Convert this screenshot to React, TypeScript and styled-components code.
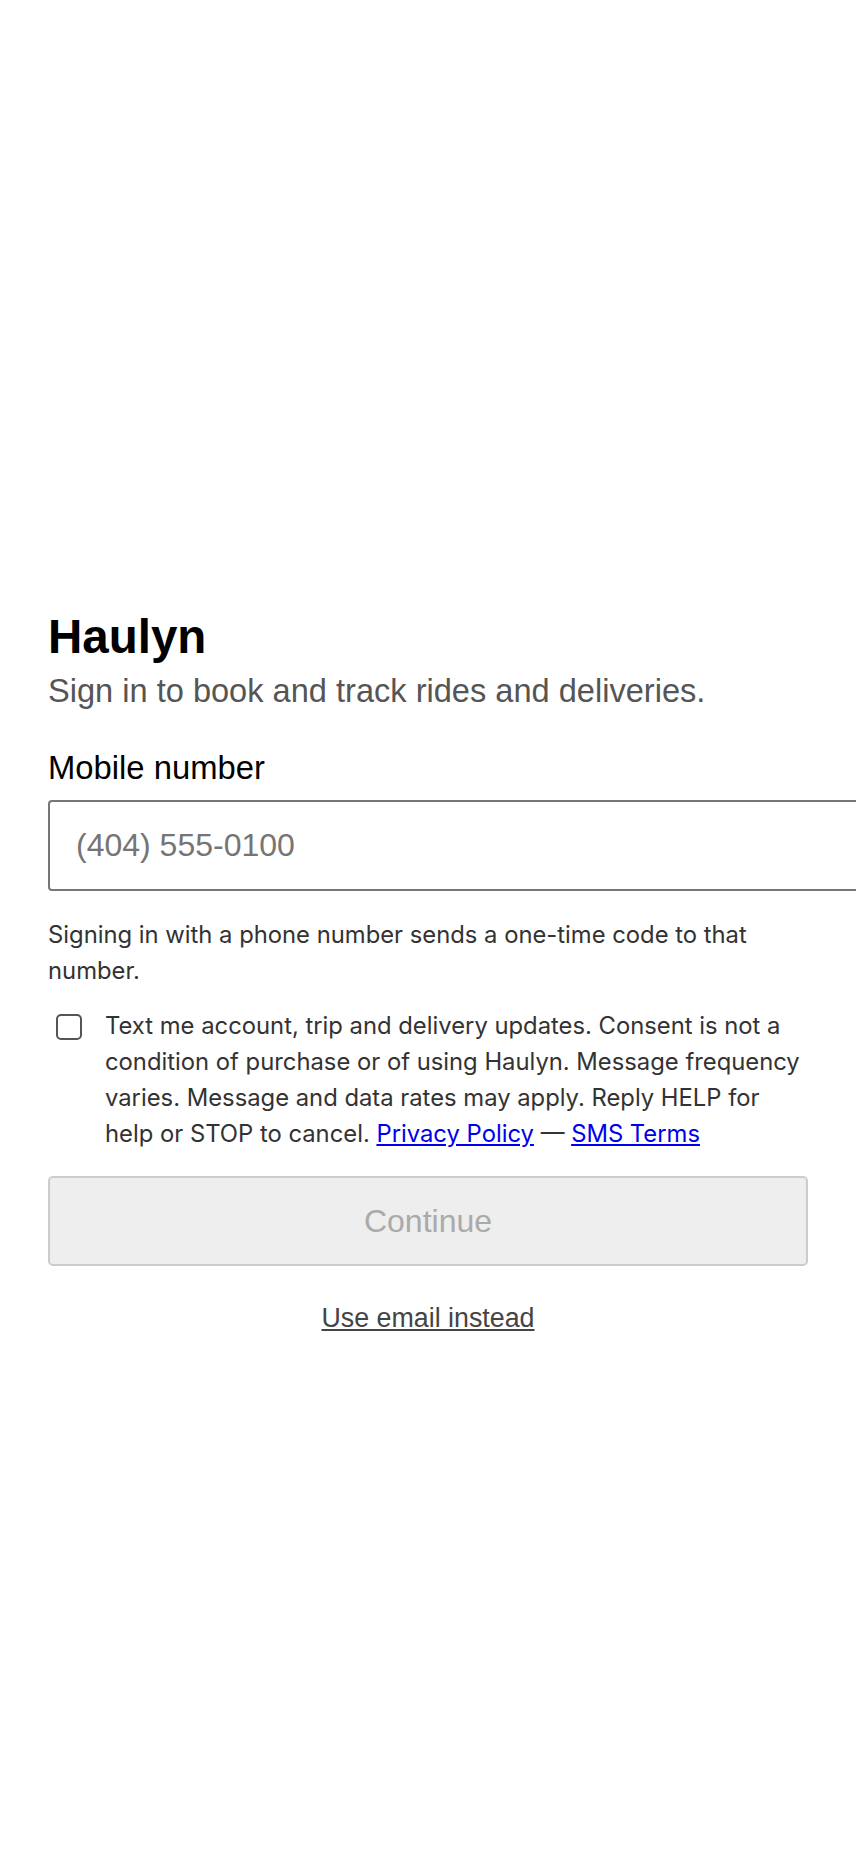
import React from "react";
import styled, { createGlobalStyle } from "styled-components";

const Global = createGlobalStyle`
  html, body { margin: 0; padding: 0; background: #ffffff; }
  body { font-family: "Liberation Sans", Arial, sans-serif; }
  * { box-sizing: border-box; }
`;

const Page = styled.main`
  min-height: 1864px;
  padding: 609px 48px 0 48px;
`;

const Panel = styled.section`
  width: 760px;
  display: flex;
  flex-direction: column;
`;

const Title = styled.h1`
  margin: 0;
  font-family: "Liberation Sans", Arial, sans-serif;
  font-weight: 700;
  font-size: 47.5px;
  line-height: 56px;
  color: #000;
`;

const Subtitle = styled.p`
  margin: 6px 0 0 0;
  font-size: 32.6px;
  line-height: 40px;
  color: #555555;
`;

const Label = styled.label`
  margin-top: 37px;
  font-size: 32.8px;
  line-height: 40px;
  color: #000;
`;

const PhoneInput = styled.input`
  margin-top: 12px;
  width: 860px;
  height: 91px;
  padding: 0 26px;
  border: 2px solid #767676;
  border-radius: 4px;
  font-family: "Liberation Sans", Arial, sans-serif;
  font-size: 32px;
  line-height: 40px;
  color: #000;
  background: #fff;
  outline: none;
  &::placeholder { color: #757575; }
`;

const Hint = styled.p`
  margin: 26px 0 0 0;
  font-family: Inter, "Noto Sans", sans-serif;
  font-size: 23.8px;
  line-height: 36px;
  color: #333333;
`;

const ConsentRow = styled.div`
  margin-top: 19px;
  display: flex;
  align-items: flex-start;
  gap: 23px;
`;

const Box = styled.input`
  flex: none;
  appearance: none;
  margin: 6px 0 0 8px;
  width: 26px;
  height: 26px;
  border: 2px solid #555;
  border-radius: 5px;
  background: #fff;
`;

const ConsentText = styled.p`
  margin: 0;
  font-family: Inter, "Noto Sans", sans-serif;
  font-size: 23.8px;
  line-height: 36px;
  color: #333333;
`;

const Link = styled.a`
  color: #0000ee;
  text-decoration: underline;
`;

const Continue = styled.button`
  margin-top: 24px;
  width: 760px;
  height: 90px;
  border: 2px solid #cccccc;
  border-radius: 5px;
  background: #eeeeee;
  color: #aaaaaa;
  font-family: "Liberation Sans", Arial, sans-serif;
  font-size: 32px;
`;

const Alt = styled.a`
  margin-top: 34px;
  align-self: center;
  font-size: 26.8px;
  line-height: 36px;
  color: #444444;
  text-decoration: underline;
`;

export default function App() {
  return (
    <>
      <Global />
      <Page>
        <Panel>
          <Title>Haulyn</Title>
          <Subtitle>Sign in to book and track rides and deliveries.</Subtitle>
          <Label htmlFor="phone">Mobile number</Label>
          <PhoneInput id="phone" type="tel" placeholder="(404) 555-0100" />
          <Hint>Signing in with a phone number sends a one-time code to that number.</Hint>
          <ConsentRow>
            <Box type="checkbox" aria-label="SMS consent" />
            <ConsentText>
              Text me account, trip and delivery updates. Consent is not a condition of purchase or of
              using Haulyn. Message frequency varies. Message and data rates may apply. Reply HELP for
              help or STOP to cancel. <Link href="#">Privacy Policy</Link> — <Link href="#">SMS Terms</Link>
            </ConsentText>
          </ConsentRow>
          <Continue disabled>Continue</Continue>
          <Alt href="#">Use email instead</Alt>
        </Panel>
      </Page>
    </>
  );
}
